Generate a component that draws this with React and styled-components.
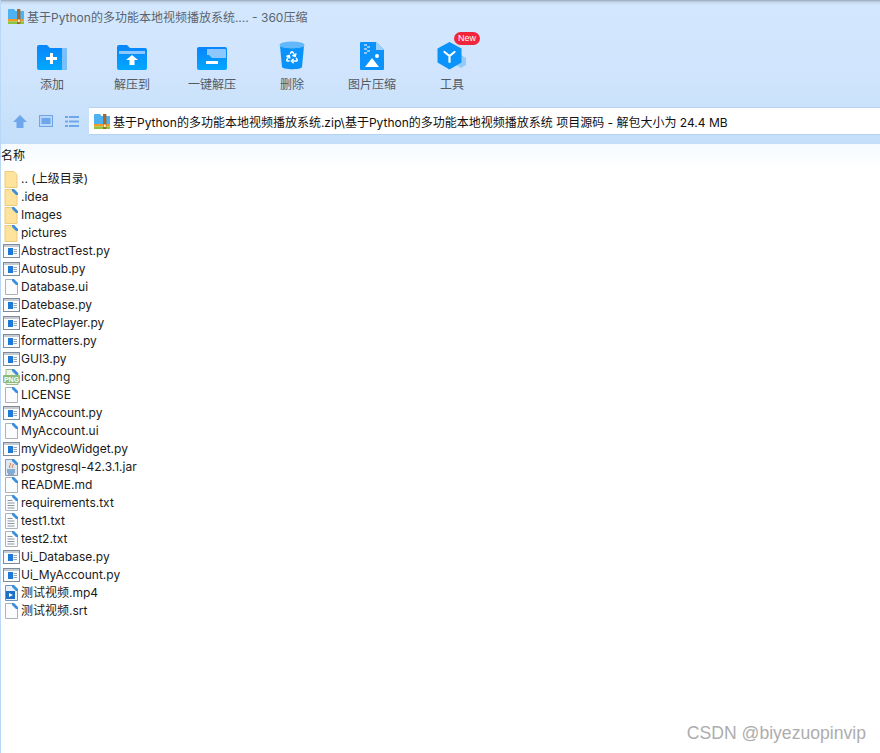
import styled, { createGlobalStyle } from "styled-components";
import { Recycle } from "lucide-react";

const GlobalStyle = createGlobalStyle`
  html, body {
    margin: 0;
    padding: 0;
    background: #fff;
  }
  body {
    font-family: Inter, "Noto Sans CJK SC", sans-serif;
  }
`;

const Window = styled.div`
  position: relative;
  box-sizing: border-box;
  width: 880px;
  height: 753px;
  overflow: hidden;
  background: #fff;
  border-left: 1px solid #b9d8f7;
`;

const Chrome = styled.header`
  height: 144px;
  box-sizing: border-box;
  background: linear-gradient(180deg, #95a6b8 0, #c3d6ea 2px, #d3e8fe 5px, #d0e5fd 50%, #c4def9 100%);
`;

const TitleBar = styled.div`
  display: flex;
  align-items: center;
  height: 28px;
  padding: 4px 0 0 7px;
  box-sizing: border-box;
  gap: 3px;
  color: #5a6470;
  font-size: 12px;
`;

const Toolbar = styled.div`
  display: flex;
  height: 76px;
  padding-left: 11px;
  box-sizing: border-box;
  padding-top: 12px;
`;

const Tool = styled.div`
  position: relative;
  width: 80px;
  display: flex;
  flex-direction: column;
  align-items: center;
  gap: 6px;
  color: #525a64;
  font-size: 12px;
  line-height: 18px;
`;

const ToolIcon = styled.div`
  width: 32px;
  height: 30px;
  display: flex;
  align-items: flex-end;
  justify-content: center;
`;

const NewBadge = styled.span`
  position: absolute;
  top: -8px;
  left: 42px;
  width: 26px;
  height: 13px;
  border-radius: 7px;
  background: #f0263c;
  color: #fff;
  font: 9px/13px "Liberation Sans", sans-serif;
  text-align: center;
`;

const NavBar = styled.div`
  display: flex;
  align-items: center;
  height: 28px;
  margin-top: 3px;
`;

const NavIcons = styled.div`
  display: flex;
  align-items: center;
  width: 88px;
  padding-left: 12px;
  box-sizing: border-box;
  gap: 12px;
`;

const PathBox = styled.div`
  flex: 1;
  display: flex;
  align-items: center;
  gap: 3px;
  height: 28px;
  box-sizing: border-box;
  padding-left: 5px;
  background: #fff;
  border-top: 1px solid #b6d3f3;
  border-bottom: 1px solid #b6d3f3;
  color: #111;
  font-size: 12px;
  white-space: nowrap;
`;

const ListHeader = styled.div`
  height: 26px;
  line-height: 23px;
  font-size: 12px;
  color: #111;
  background: linear-gradient(180deg, #f5faff 0%, #ffffff 100%);
`;

const FileList = styled.ul`
  list-style: none;
  margin: 0;
  padding: 0;
`;

const Row = styled.li`
  display: flex;
  align-items: center;
  height: 18px;
  line-height: 18px;
  font-size: 12px;
  color: #1a1a1a;
  white-space: nowrap;
`;

const RowIcon = styled.span`
  width: 20px;
  height: 18px;
  display: flex;
  align-items: center;
  justify-content: center;
  flex: none;
`;

const Watermark = styled.div`
  position: absolute;
  right: 14px;
  bottom: 10px;
  color: #adadad;
  font: 17.6px/20px "Liberation Sans", sans-serif;
`;

const ZipIcon = () => (
  <svg width="16" height="15" viewBox="0 0 16 15">
    <path d="M0 1a1 1 0 0 1 1-1h5l1.500 2H16v8H0z" fill="#4cb2f2" />
    <path d="M0 10h16v2.500H0z" fill="#f59b24" />
    <path d="M0 12.500h16V15H0z" fill="#8cc63f" />
    <rect x="9" y="0" width="3.400" height="15" fill="#a5692c" />
    <rect x="9.600" y="10.500" width="2.200" height="2.500" fill="#fff3c4" />
  </svg>
);

const Folder = ({ tab = true, children }) => (
  <svg width="30" height="25" viewBox="0 0 30 25">
    <defs>
      <linearGradient id="fb" x1="0" y1="0" x2="0" y2="1">
        <stop offset="0" stopColor="#0a84fb" />
        <stop offset="1" stopColor="#00a8ff" />
      </linearGradient>
    </defs>
    {tab ? (
      <path d="M0 2a2 2 0 0 1 2-2h8l3 3h15a2 2 0 0 1 2 2v18a2 2 0 0 1-2 2H2a2 2 0 0 1-2-2z" fill="url(#fb)" />
    ) : (
      <rect x="0" y="2" width="30" height="23" rx="2" fill="url(#fb)" />
    )}
    {children}
  </svg>
);

const icons = {
  add: (
    <Folder>
      <path d="M25 3h3a2 2 0 0 1 2 2v18a2 2 0 0 1-2 2h-3z" fill="#7cc0fb" />
      <path d="M13 8h3v4h4v3h-4v4h-3v-4H9v-3h4z" fill="#fff" />
    </Folder>
  ),
  extractTo: (
    <Folder>
      <path d="M2 6h26v3H2z" fill="#8cc8fd" />
      <path d="M15 10l6 5h-3.500v5h-5v-5H9z" fill="#fff" />
    </Folder>
  ),
  oneKey: (
    <Folder tab={false}>
      <path d="M10 4h18a1 1 0 0 1 1 1v8H15l-3-3H10z" fill="#8cc8fd" />
      <rect x="9" y="16" width="12" height="3" fill="#fff" />
    </Folder>
  ),
  recycle: (
    <svg width="26" height="29" viewBox="0 0 26 29">
      <ellipse cx="13" cy="4" rx="12.500" ry="3.500" fill="#63b8fb" />
      <path d="M1 5c3 3 21 3 24 0l-2 21c-.5 3-19 3-20 0z" fill="#0a94fb" />
      <Recycle x="6" y="9" width="14" height="14" color="#fff" strokeWidth="2.500" />
    </svg>
  ),
  picture: (
    <svg width="24" height="28" viewBox="0 0 24 28">
      <path d="M1 0h15l8 8v19a1 1 0 0 1-1 1H1a1 1 0 0 1-1-1V1a1 1 0 0 1 1-1z" fill="#0b93fb" />
      <path d="M16 0l8 8h-8z" fill="#9ad0fd" />
      <path d="M4 2h3v2H4zm3 2h3v2H7zM4 6h3v2H4zm3 2h3v2H7zM4 10h3v2H4z" fill="#8cc8fd" />
      <circle cx="17" cy="14" r="2" fill="#fff" />
      <path d="M5 25l7-9 7 9z" fill="#fff" />
    </svg>
  ),
  tools: (
    <svg width="30" height="29" viewBox="0 0 30 29">
      <path d="M24 14l5 3v7l-5 3-5-3v-7z" fill="#93ccfb" />
      <path d="M12.500 1l12 6.500v14l-12 7-12-7v-14z" fill="#0a94fb" />
      <path d="M12.500 15v6M12.500 15l-5-4M12.500 15l5-4" stroke="#fff" strokeWidth="2.200" fill="none" strokeLinecap="round" />
    </svg>
  ),
};

const tools = [
  ["add", "添加"],
  ["extractTo", "解压到"],
  ["oneKey", "一键解压"],
  ["recycle", "删除"],
  ["picture", "图片压缩"],
  ["tools", "工具", true],
];

const Page = ({ children }) => (
  <svg width="14" height="16" viewBox="0 0 14 16">
    <path d="M1.500.5h8l4 4v11h-12z" fill="#fbfcfd" stroke="#aab3bc" />
    <path d="M8 0h2l4 4v2h-2L8 2z" fill="#3d8fdc" />
    {children}
  </svg>
);

const PyIcon = () => (
  <svg width="17" height="14" viewBox="0 0 17 14">
    <rect x=".5" y=".5" width="16" height="13" fill="#fbfcfd" stroke="#808b97" />
    <rect x="1" y="1" width="15" height="2" fill="#c4ccd4" />
    <rect x="5" y="4" width="5" height="7" fill="#1d78d8" />
    <path d="M10.500 5h3.500v1h-3.500zm0 2h3.500v1h-3.500zm0 2h3.500v1h-3.500z" fill="#9aa5b1" />
  </svg>
);

const FolderRow = ({ marked }) => (
  <svg width="14" height="17" viewBox="0 0 14 17">
    <path d="M1 .5h9l3 3v13H1z" fill="#fde39c" stroke="#ebcb7c" />
    {marked && <path d="M8 0h2l4 4v2h-2L8 2z" fill="#3d8fdc" />}
  </svg>
);

const TxtIcon = () => (
  <Page>
    <path d="M3.500 5h5v1h-5zm0 2.500h7v1h-7zm0 2.500h7v1h-7zm0 2.500h7v1h-7z" fill="#8b95a0" />
  </Page>
);

const PngIcon = () => (
  <svg width="17" height="16" viewBox="0 0 17 16">
    <path d="M3 .5h8l4 4v11H3z" fill="#eef5e6" stroke="#9bb98a" />
    <path d="M9 0h2l4 4v2h-2L9 2z" fill="#3d8fdc" />
    <rect x="0" y="6" width="17" height="8" rx="1" fill="#8cbb78" />
    <text x="8.500" y="12.500" textAnchor="middle" fontSize="7" fontWeight="700" fill="#fff" fontFamily="Liberation Sans">PNG</text>
  </svg>
);

const JarIcon = () => (
  <svg width="15" height="17" viewBox="0 0 15 17">
    <path d="M1.500.5h8l4 4v12h-12z" fill="#dfe8f1" stroke="#8b9bac" />
    <path d="M8 0h2l4 4v2h-2L8 2z" fill="#3d8fdc" />
    <path d="M6 4c2 2-2 3 0 5M9 5c1 2-2 2 0 4" stroke="#d8602a" fill="none" />
    <path d="M3 11h8M3 13h8M4 15h6" stroke="#2c6fb3" />
  </svg>
);

const VideoIcon = () => (
  <svg width="15" height="16" viewBox="0 0 15 16">
    <path d="M1.500.5h8l4 4v11h-12z" fill="#e9f2fb" stroke="#6f94bd" />
    <path d="M8 0h2l4 4v2h-2L8 2z" fill="#3d8fdc" />
    <rect x="2" y="6" width="9" height="8" fill="#1e70c4" />
    <path d="M5 8l4 2-4 2z" fill="#fff" />
  </svg>
);

const fileIcons = {
  up: <FolderRow />,
  folder: <FolderRow marked />,
  py: <PyIcon />,
  doc: <Page />,
  txt: <TxtIcon />,
  png: <PngIcon />,
  jar: <JarIcon />,
  video: <VideoIcon />,
};

const files = [
  ["up", ".. (上级目录)"],
  ["folder", ".idea"],
  ["folder", "Images"],
  ["folder", "pictures"],
  ["py", "AbstractTest.py"],
  ["py", "Autosub.py"],
  ["doc", "Database.ui"],
  ["py", "Datebase.py"],
  ["py", "EatecPlayer.py"],
  ["py", "formatters.py"],
  ["py", "GUI3.py"],
  ["png", "icon.png"],
  ["doc", "LICENSE"],
  ["py", "MyAccount.py"],
  ["doc", "MyAccount.ui"],
  ["py", "myVideoWidget.py"],
  ["jar", "postgresql-42.3.1.jar"],
  ["doc", "README.md"],
  ["txt", "requirements.txt"],
  ["txt", "test1.txt"],
  ["txt", "test2.txt"],
  ["py", "Ui_Database.py"],
  ["py", "Ui_MyAccount.py"],
  ["video", "测试视频.mp4"],
  ["doc", "测试视频.srt"],
];

export default function App() {
  return (
    <>
      <GlobalStyle />
      <Window>
        <Chrome>
          <TitleBar>
            <ZipIcon />
            <span>基于Python的多功能本地视频播放系统.... - 360压缩</span>
          </TitleBar>
          <Toolbar>
            {tools.map(([key, label, isNew]) => (
              <Tool key={key}>
                <ToolIcon>{icons[key]}</ToolIcon>
                {label}
                {isNew && <NewBadge>New</NewBadge>}
              </Tool>
            ))}
          </Toolbar>
          <NavBar>
            <NavIcons>
              <svg width="14" height="13" viewBox="0 0 14 13">
                <path d="M7 0l7 7h-3.500v6h-7V7H0z" fill="#6ea6ec" />
              </svg>
              <svg width="14" height="12" viewBox="0 0 14 12">
                <rect x=".5" y=".5" width="13" height="11" fill="#b9d6f8" stroke="#6ea6ec" />
                <rect x="2.500" y="3" width="9" height="6" fill="#6ea6ec" />
              </svg>
              <svg width="14" height="11" viewBox="0 0 14 11">
                <path d="M0 0h3v2H0zm4 0h10v2H4zM0 4.500h3v2H0zm4 0h10v2H4zM0 9h3v2H0zm4 0h10v2H4z" fill="#6ea6ec" />
              </svg>
            </NavIcons>
            <PathBox>
              <ZipIcon />
              <span>基于Python的多功能本地视频播放系统.zip\基于Python的多功能本地视频播放系统 项目源码 - 解包大小为 24.4 MB</span>
            </PathBox>
          </NavBar>
        </Chrome>
        <ListHeader>名称</ListHeader>
        <FileList>
          {files.map(([type, name]) => (
            <Row key={name}>
              <RowIcon>{fileIcons[type]}</RowIcon>
              {name}
            </Row>
          ))}
        </FileList>
        <Watermark>CSDN @biyezuopinvip</Watermark>
      </Window>
    </>
  );
}
